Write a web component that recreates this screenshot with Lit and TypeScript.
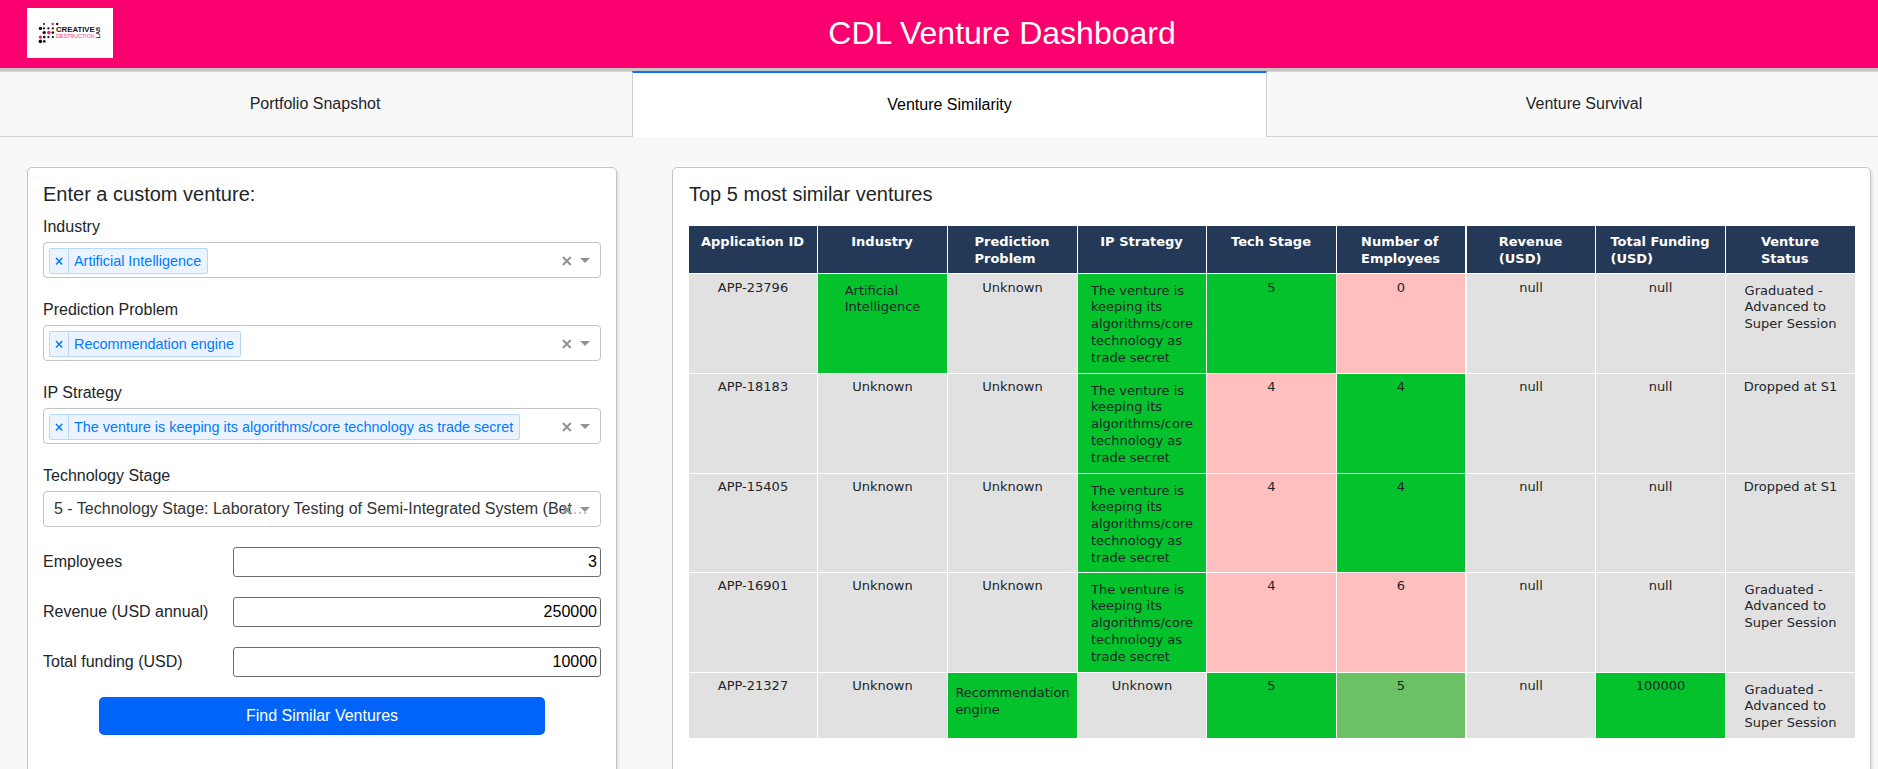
import { LitElement, html, svg, css } from "lit";
import { customElement, property } from "lit/decorators.js";
import { classMap } from "lit/directives/class-map.js";

type Tone = "plain" | "match" | "near" | "miss";
interface Cell {
  text: string[];
  tone?: Tone;
  low?: boolean;
}

const IP_LINES = ["The venture is", "keeping its", "algorithms/core", "technology as", "trade secret"];
const GRADUATED = ["Graduated -", "Advanced to", "Super Session"];

const c = (text: string | string[], tone: Tone = "plain", low = false): Cell => ({
  text: Array.isArray(text) ? text : [text],
  tone,
  low,
});

const HEADERS: string[][] = [
  ["Application ID"],
  ["Industry"],
  ["Prediction", "Problem"],
  ["IP Strategy"],
  ["Tech Stage"],
  ["Number of", "Employees"],
  ["Revenue", "(USD)"],
  ["Total Funding", "(USD)"],
  ["Venture", "Status"],
];

const ROWS: Cell[][] = [
  [c("APP-23796"), c(["Artificial", "Intelligence"], "match"), c("Unknown"), c(IP_LINES, "match"), c("5", "match"), c("0", "miss"), c("null"), c("null"), c(GRADUATED)],
  [c("APP-18183"), c("Unknown"), c("Unknown"), c(IP_LINES, "match"), c("4", "miss"), c("4", "match"), c("null"), c("null"), c("Dropped at S1")],
  [c("APP-15405"), c("Unknown"), c("Unknown"), c(IP_LINES, "match"), c("4", "miss"), c("4", "match"), c("null"), c("null"), c("Dropped at S1")],
  [c("APP-16901"), c("Unknown"), c("Unknown"), c(IP_LINES, "match"), c("4", "miss"), c("6", "miss"), c("null"), c("null"), c(GRADUATED)],
  [c("APP-21327"), c("Unknown"), c(["Recommendation", "engine"], "match", true), c("Unknown"), c("5", "match"), c("5", "near"), c("null"), c("100000", "match"), c(GRADUATED)],
];

@customElement("cdl-logo")
export class CdlLogo extends LitElement {
  static styles = css`
    :host {
      display: block;
      width: 86px;
      height: 50px;
      background: #fff;
    }
    .art {
      display: block;
    }
    .name {
      font-family: "Liberation Sans", sans-serif;
      font-weight: 700;
      fill: #111;
    }
    .sub {
      font-family: "Liberation Sans", sans-serif;
      fill: #f0447f;
    }
  `;

  // x, y, radius, pink
  private dots: [number, number, number, boolean][] = [
    [17, 16, 1, false], [25.7, 16, 1.2, true], [30.2, 16, 1.2, false],
    [13.4, 20.4, 1.7, false], [17, 20.4, 1.1, false], [21.4, 20.4, 1.1, false], [25.8, 20.4, 1.1, false],
    [17.2, 24.6, 1.7, false], [21.8, 24.6, 1.8, true], [25.8, 24.6, 1.3, false],
    [13.4, 29.1, 1.7, true], [17.2, 29.1, 1.3, false], [21.4, 29.1, 1.1, false], [25.8, 29.1, 1.1, false],
    [13.4, 33.4, 1.8, false], [17.3, 33.4, 1.3, false],
  ];

  render() {
    return html`<svg class="art" width="86" height="50" viewBox="0 0 86 50">
      ${this.dots.map(([x, y, r, pink]) => svg`<circle cx=${x} cy=${y} r=${r} fill=${pink ? "#fa1a78" : "#111"}></circle>`)}
      <text class="name" x="29" y="24" font-size="7.4" textLength="38.7" lengthAdjust="spacingAndGlyphs">CREATIVE</text>
      <text class="sub" x="29" y="30.2" font-size="5.1" textLength="38.7" lengthAdjust="spacingAndGlyphs">DESTRUCTION</text>
      <text class="name" transform="translate(73 30.4) rotate(-90)" font-size="5.1" textLength="11.6" lengthAdjust="spacingAndGlyphs">LAB</text>
    </svg>`;
  }
}

@customElement("select-box")
export class SelectBox extends LitElement {
  @property() label = "";
  @property() value = "";
  @property({ type: Boolean }) multi = false;

  static styles = css`
    :host {
      display: block;
    }
    .label {
      line-height: 24px;
      margin-bottom: 3px;
    }
    .control {
      box-sizing: border-box;
      position: relative;
      height: 36px;
      border: 1px solid #c4c4c4;
      border-radius: 4px;
      background: #fff;
      display: flex;
    }
    .tag {
      box-sizing: border-box;
      display: flex;
      height: 26px;
      margin: 5px 0 0 5px;
      border: 1px solid #b8d8fb;
      border-radius: 2px;
      background: #ebf3ff;
      color: #007bff;
      font-size: 14.4px;
      line-height: 25px;
    }
    .remove {
      display: flex;
      align-items: center;
      justify-content: center;
      width: 18px;
      border-right: 1px solid #b8d8fb;
    }
    .tag-text {
      padding: 0 6px 0 5px;
      white-space: nowrap;
    }
    .single {
      flex: 1;
      min-width: 0;
      padding: 0 10px;
      line-height: 34px;
      color: #aaa;
      overflow: hidden;
      white-space: nowrap;
      text-overflow: ellipsis;
    }
    .single-text {
      color: #333;
    }
    .tools {
      position: absolute;
      right: 10px;
      top: 13px;
      display: flex;
      gap: 8px;
      align-items: flex-start;
    }
    .arrow {
      margin-top: 1px;
    }
  `;

  render() {
    return html`
      <div class="label">${this.label}</div>
      <div class="control">
        ${this.multi
          ? html`<div class="tag">
              <span class="remove">
                <svg width="8" height="8" viewBox="0 0 8 8"><path d="M1 1L7.2 7.4M7.2 1L1 7.4" stroke="#007bff" stroke-width="1.5"></path></svg>
              </span>
              <span class="tag-text">${this.value}</span>
            </div>`
          : html`<div class="single"><span class="single-text">${this.value}</span></div>`}
        <div class="tools">
          <svg width="10" height="10" viewBox="0 0 10 10"><path d="M.9 1L8.7 9M8.7 1L.9 9" stroke="#929292" stroke-width="2"></path></svg>
          <svg class="arrow" width="10" height="7" viewBox="0 0 10 7"><path d="M0 1H10L5 6Z" fill="#929292"></path></svg>
        </div>
      </div>
    `;
  }
}

@customElement("venture-table")
export class VentureTable extends LitElement {
  static styles = css`
    :host {
      display: block;
    }
    .grid {
      display: grid;
      grid-template-columns: 129px 130px 130px 129px 130px 130px 129px 130px 129px;
      grid-template-rows: 48px 100px 100px 99px 100px 65px;
      font: 13px/16.9px Verdana, "DejaVu Sans", sans-serif;
      color: #212529;
    }
    .cell {
      box-sizing: border-box;
      display: flex;
      justify-content: center;
      align-items: flex-start;
      border-right: 1px solid #fff;
      border-bottom: 1px solid #fff;
      padding: 5px 0 0;
      background: #e1e1e1;
      white-space: nowrap;
    }
    .wide-gap {
      border-right-width: 2px;
    }
    .last {
      border-right: 0;
    }
    .bottom {
      border-bottom: 0;
    }
    .first {
      padding-top: 6px;
    }
    .multi {
      padding-top: 8.5px;
    }
    .low {
      padding-top: 12px;
    }
    .head {
      padding: 7px 1px 0 0;
      line-height: 17px;
      background: #243957;
      color: #fff;
      font-weight: 700;
    }
    .match {
      background: #03c22c;
    }
    .near {
      background: #6bc163;
    }
    .miss {
      background: #ffbfbf;
    }
    .line {
      display: block;
    }
  `;

  private cell(lines: string[], col: number, extra: Record<string, boolean>) {
    const classes = { cell: true, "wide-gap": col === 5, last: col === 8, ...extra };
    return html`<div class=${classMap(classes)}><div>${lines.map((l) => html`<span class="line">${l}</span>`)}</div></div>`;
  }

  render() {
    return html`<div class="grid">
      ${HEADERS.map((h, i) => this.cell(h, i, { head: true }))}
      ${ROWS.map((row, r) =>
        row.map((cell, i) =>
          this.cell(cell.text, i, {
            first: r === 0,
            bottom: r === ROWS.length - 1,
            multi: cell.text.length > 1,
            low: !!cell.low,
            [cell.tone ?? "plain"]: true,
          })
        )
      )}
    </div>`;
  }
}

@customElement("app-root")
export class AppRoot extends LitElement {
  static styles = css`
    :host {
      display: flex;
      flex-direction: column;
      height: 769px;
      overflow: hidden;
      background: #f8f8f8;
      color: #212529;
      font: 16px/24px "Liberation Sans", Arial, sans-serif;
    }
    .header {
      box-sizing: border-box;
      flex: none;
      display: flex;
      height: 71px;
      padding: 8px 0 0 27px;
      background: #f9006e;
      border-bottom: 3px solid #c4c4c4;
    }
    .title {
      flex: 1;
      margin: 0;
      padding: 6px 0 0 13px;
      text-align: center;
      font-size: 32px;
      font-weight: 400;
      line-height: 38px;
      color: #fff;
    }
    .tabs {
      flex: none;
      display: grid;
      grid-template-columns: 632px 635px 634px;
      height: 66px;
    }
    .tab {
      box-sizing: border-box;
      padding: 20px 2px 0 0;
      text-align: center;
      background: #f8f8f8;
      border-top: 1px solid #d6d6d6;
      border-bottom: 1px solid #d0d0d0;
    }
    .tab.active {
      padding-right: 0;
      background: #fff;
      color: #000;
      border: solid #d0d0d0;
      border-width: 0 1px;
      border-top: 2px solid #0d6efd;
    }
    .tab.tail {
      padding-right: 0;
    }
    .content {
      flex: none;
      display: flex;
      gap: 55px;
      height: 720px;
      padding: 30px 7px 0 27px;
    }
    .card {
      box-sizing: border-box;
      background: #fff;
      border: 1px solid #c4c4c4;
      border-radius: 5px;
      box-shadow: 2px 2px 2px #e6e6e6;
    }
    .form {
      flex: none;
      width: 590px;
      padding: 14px 15px;
    }
    .results {
      flex: 1;
      padding: 14px 15px 0 16px;
    }
    .heading {
      margin: 0;
      font-size: 20px;
      font-weight: 400;
      line-height: 24px;
    }
    .selects {
      display: flex;
      flex-direction: column;
      gap: 20px;
      margin-top: 9px;
    }
    .fields {
      display: flex;
      flex-direction: column;
      gap: 20px;
      margin-top: 20px;
    }
    .field {
      display: flex;
      align-items: center;
      justify-content: space-between;
    }
    .input {
      box-sizing: border-box;
      width: 368px;
      height: 30px;
      margin: 0;
      padding: 0 3px;
      border: 1px solid #6d6d6d;
      border-radius: 3px;
      background: #fff;
      color: #000;
      font: inherit;
      text-align: right;
    }
    .submit {
      display: block;
      width: 446px;
      height: 38px;
      margin: 20px auto 0;
      padding: 0;
      border: 0;
      border-radius: 5px;
      background: #0064fa;
      color: #fff;
      font: inherit;
    }
    .table {
      margin-top: 20px;
    }
  `;

  render() {
    const fields: [string, string][] = [
      ["Employees", "3"],
      ["Revenue (USD annual)", "250000"],
      ["Total funding (USD)", "10000"],
    ];
    return html`
      <header class="header">
        <cdl-logo></cdl-logo>
        <h1 class="title">CDL Venture Dashboard</h1>
      </header>
      <nav class="tabs">
        <div class="tab">Portfolio Snapshot</div>
        <div class="tab active">Venture Similarity</div>
        <div class="tab tail">Venture Survival</div>
      </nav>
      <main class="content">
        <section class="card form">
          <h2 class="heading">Enter a custom venture:</h2>
          <div class="selects">
            <select-box multi label="Industry" value="Artificial Intelligence"></select-box>
            <select-box multi label="Prediction Problem" value="Recommendation engine"></select-box>
            <select-box multi label="IP Strategy" value="The venture is keeping its algorithms/core technology as trade secret"></select-box>
            <select-box
              label="Technology Stage"
              value="5 - Technology Stage: Laboratory Testing of Semi-Integrated System (Beta Prototype)"
            ></select-box>
          </div>
          <div class="fields">
            ${fields.map(([label, value]) => html`<label class="field">${label}<input class="input" .value=${value} /></label>`)}
          </div>
          <button class="submit">Find Similar Ventures</button>
        </section>
        <section class="card results">
          <h2 class="heading">Top 5 most similar ventures</h2>
          <venture-table class="table"></venture-table>
        </section>
      </main>
    `;
  }
}
